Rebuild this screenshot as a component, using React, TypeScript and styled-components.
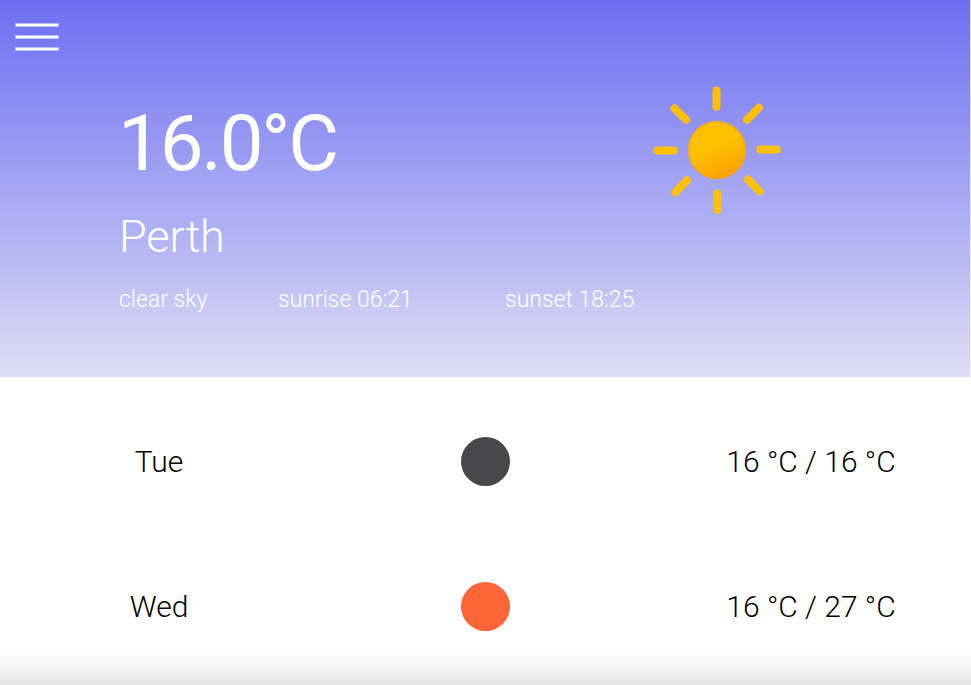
import React from "react";
import styled, { createGlobalStyle } from "styled-components";

const GlobalStyle = createGlobalStyle`
  * { box-sizing: border-box; }
  body { margin: 0; background: #fff; font-family: Roboto, sans-serif; font-weight: 300; overflow: hidden; }
`;

const Page = styled.main`
  display: flex;
  flex-direction: column;
  height: 685px;
  position: relative;
  overflow: hidden;
`;

const Hero = styled.section`
  display: flex;
  flex-direction: column;
  align-items: flex-start;
  height: 377px;
  color: #fff;
  background: linear-gradient(#6e6ff0, #8283f2 19%, #a4a6f3 50%, #b9baf3 69%, #cfcef3 86%, #dedcf5);
  border-right: 1px solid rgba(255, 255, 255, 0.75);
`;

const MenuButton = styled.button`
  display: flex;
  flex-direction: column;
  gap: 8px;
  width: 44px;
  height: 63px;
  padding: 23px 0 0;
  margin: 0 0 0 15px;
  border: 0;
  background: none;
`;

const MenuBar = styled.span`
  flex: none;
  height: 4px;
  width: 44px;
  border: 1px solid rgba(255, 255, 255, 0.5);
  border-radius: 1px;
  background: #fff;
  background-clip: padding-box;
`;

const Current = styled.div`
  display: flex;
  padding: 23px 0 0 119px;
`;

const Reading = styled.div`
  width: 534px;
`;

const Temperature = styled.h1`
  margin: 11px 0 0 -1px;
  font-size: 78px;
  line-height: 94px;
  font-weight: 400;
  letter-spacing: -2.2px;
`;

const City = styled.h2`
  margin: 19px 0 0;
  font-size: 45px;
  line-height: 54px;
  font-weight: 300;
  letter-spacing: -0.1px;
`;

const Details = styled.div`
  display: flex;
  padding: 22px 0 0 119px;
  font-size: 23px;
  line-height: 28px;
`;

const Detail = styled.span<{ $width: number }>`
  width: ${(p) => p.$width}px;
  white-space: nowrap;
`;

const Forecast = styled.section`
  padding-top: 12px;
`;

const Row = styled.div`
  display: grid;
  grid-template-columns: 318px 335px 316px;
  height: 145px;
  align-items: center;
  justify-items: center;
  font-size: 30px;
`;

const Dot = styled.span<{ $color: string }>`
  width: 49px;
  height: 49px;
  border-radius: 50%;
  background: ${(p) => p.$color};
`;

const Fade = styled.div`
  position: absolute;
  inset: auto 0 0;
  height: 34px;
  background: linear-gradient(rgba(0, 0, 0, 0), rgba(0, 0, 0, 0.035) 45%, rgba(0, 0, 0, 0.11));
`;

const days = [
  { day: "Tue", color: "#48484a", range: "16 °C / 16 °C" },
  { day: "Wed", color: "#fd6639", range: "16 °C / 27 °C" },
];

function Sun() {
  return (
    <svg width="128" height="128" viewBox="0 0 128 128" aria-label="Sun">
      <defs>
        <linearGradient id="disc" x1="0.3" y1="0" x2="0.75" y2="1">
          <stop offset="0.45" stopColor="#ffc000" />
          <stop offset="0.95" stopColor="#ff9f00" />
        </linearGradient>
        <linearGradient id="rim" x1="0.3" y1="0" x2="0.75" y2="1">
          <stop offset="0" stopColor="#fbb300" />
          <stop offset="1" stopColor="#ffa500" />
        </linearGradient>
      </defs>
      <circle cx="64" cy="64" r="28.2" fill="url(#disc)" stroke="url(#rim)" strokeWidth="1.8" />
      <path
        d="M63.5 4.5v16.3M64.3 107.5v16.3M4.3 64.5h16.5M107.3 63.5h16.5M21.5 22.5l11.5 11.2M105.8 21.7l-11.8 12M22.5 106.3l11.5-12M106.5 105.3l-11.5-11.8"
        fill="none"
        stroke="#ffc107"
        strokeWidth="8"
        strokeLinecap="round"
      />
    </svg>
  );
}

export default function App() {
  return (
    <>
      <GlobalStyle />
      <Page>
        <Hero>
          <MenuButton aria-label="Menu"><MenuBar /><MenuBar /><MenuBar /></MenuButton>
          <Current>
            <Reading>
              <Temperature>16.0°C</Temperature>
              <City>Perth</City>
            </Reading>
            <Sun />
          </Current>
          <Details>
            <Detail $width={159}>clear sky</Detail>
            <Detail $width={227}>sunrise 06:21</Detail>
            <Detail $width={140}>sunset 18:25</Detail>
          </Details>
        </Hero>
        <Forecast>
          {days.map(({ day, color, range }) => (
            <Row key={day}>
              <span>{day}</span>
              <Dot $color={color} />
              <span>{range}</span>
            </Row>
          ))}
        </Forecast>
        <Fade />
      </Page>
    </>
  );
}
